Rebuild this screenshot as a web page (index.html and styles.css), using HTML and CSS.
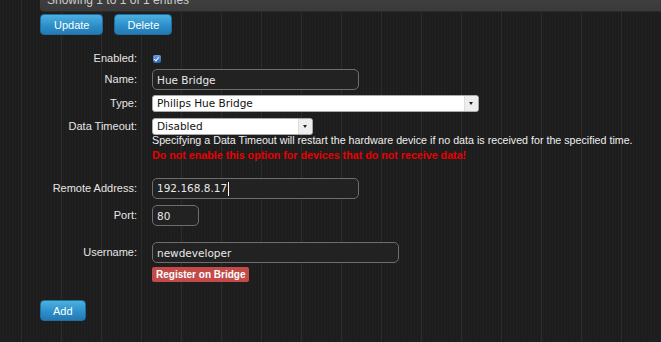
FILE: index.html
```html
<!DOCTYPE html>
<html lang="en">
<head>
  <meta charset="UTF-8" />
  <title>Hardware</title>
  <link rel="stylesheet" href="styles.css">
</head>
<body>

  <div class="info-bar">Showing 1 to 1 of 1 entries</div>

  <div class="actions">
    <button class="btn btn-update">Update</button>
    <button class="btn">Delete</button>
  </div>

  <form class="hw-form">
    <div class="row row-check">
      <label>Enabled:</label>
      <div class="field"><span class="check"></span></div>
    </div>
    <div class="row row-name">
      <label>Name:</label>
      <div class="field"><input type="text" class="text wide" value="Hue Bridge"></div>
    </div>
    <div class="row row-select">
      <label>Type:</label>
      <div class="field"><div class="select type-select">Philips Hue Bridge<span class="arrow"></span></div></div>
    </div>
    <div class="row row-select row-timeout">
      <label>Data Timeout:</label>
      <div class="field">
        <div class="select timeout-select">Disabled<span class="arrow"></span></div>
        <p class="help">Specifying a Data Timeout will restart the hardware device if no data is received for the specified time.</p>
        <p class="warn">Do not enable this option for devices that do not receive data!</p>
      </div>
    </div>

    <div class="row spaced">
      <label>Remote Address:</label>
      <div class="field"><div class="text wide focused">192.168.8.17<span class="caret"></span></div></div>
    </div>
    <div class="row">
      <label>Port:</label>
      <div class="field"><input type="text" class="text port" value="80"></div>
    </div>

    <div class="row spaced-lg">
      <label>Username:</label>
      <div class="field">
        <input type="text" class="text user" value="newdeveloper">
        <button type="button" class="btn-red">Register on Bridge</button>
      </div>
    </div>
  </form>

  <div class="actions add">
    <button class="btn">Add</button>
  </div>

</body>
</html>
```

FILE: styles.css
```css
body {
  margin: 0;
  padding: 0;
  width: 661px;
  height: 342px;
  overflow: hidden;
  font-family: "Liberation Sans", Arial, sans-serif;
  font-size: 11px;
  color: #e6e6e6;
  background-color: #1d1d1d;
  background-image:
    repeating-linear-gradient(90deg, transparent 0, transparent 21px, #2c2c2c 21px, #2c2c2c 22px, transparent 22px, transparent 40px),
    repeating-linear-gradient(90deg, rgba(255,255,255,0.015) 0, rgba(255,255,255,0.015) 1px, transparent 1px, transparent 3px);
}

.info-bar {
  margin-left: 40px;
  height: 11px;
  line-height: 0;
  overflow: hidden;
  background: linear-gradient(#3e3e3e, #3a3a3a);
  border-bottom: 1px solid #2a2a2a;
  border-bottom-left-radius: 4px;
  color: #ccc;
  padding-left: 7px;
  font-size: 12px;
}

.actions {
  display: flex;
  gap: 11px;
  padding-left: 40px;
  margin-top: 2px;
}

.btn {
  height: 21px;
  padding: 0 12px;
  border: 1px solid #1f6e9e;
  border-radius: 4px;
  background: linear-gradient(#4cb0e0, #2b8dc8 60%, #2479b3);
  color: #fff;
  font-family: "Liberation Sans", Arial, sans-serif;
  font-size: 11px;
}

.btn-update {
  padding: 0 13px;
}

.hw-form {
  margin-top: 17px;
}

.row {
  display: flex;
  align-items: flex-start;
  margin-top: 6px;
}

.row label {
  width: 137px;
  text-align: right;
  line-height: 20px;
  flex-shrink: 0;
}

.field {
  margin-left: 15px;
  display: flex;
  flex-direction: column;
  align-items: flex-start;
}

.row-check {
  margin-top: 0;
}

.row-check label {
  line-height: 12px;
}

.row-name {
  margin-top: 5px;
}

.check {
  display: block;
  width: 8px;
  height: 8px;
  margin: 3px 0 0 1px;
  border-radius: 2px;
  background: linear-gradient(#6aa0e0, #2e62b8);
  position: relative;
}

.check::after {
  content: "";
  position: absolute;
  left: 2px;
  top: 1px;
  width: 2px;
  height: 4px;
  border: solid #fff;
  border-width: 0 1.5px 1.5px 0;
  transform: rotate(40deg);
}

.text {
  box-sizing: border-box;
  height: 21px;
  padding: 0 4px;
  border: 1px solid #6e6e6e;
  border-radius: 5px;
  background: #222;
  color: #e8e8e8;
  font-family: "DejaVu Sans", sans-serif;
  font-size: 10.5px;
  line-height: 19px;
  outline: none;
}

.wide {
  width: 207px;
}

.port {
  width: 47px;
}

.user {
  width: 247px;
}

.focused {
  display: flex;
  align-items: center;
}

.caret {
  display: inline-block;
  width: 1px;
  height: 14px;
  background: #fff;
  margin-left: 1px;
}

.row-select {
  margin-top: 5px;
}

.row-timeout {
  margin-top: 6px;
}

.row-select label {
  line-height: 17px;
}

.select {
  box-sizing: border-box;
  position: relative;
  height: 17px;
  padding: 0 4px;
  border: 1px solid #aaa;
  border-radius: 3px;
  background: #fff;
  color: #111;
  font-family: "DejaVu Sans", sans-serif;
  font-size: 10.5px;
  line-height: 15px;
}

.type-select {
  width: 327px;
}

.timeout-select {
  width: 161px;
}

.arrow {
  position: absolute;
  right: 0;
  top: 0;
  width: 13px;
  height: 15px;
  background: #eee;
  border-left: 1px solid #ddd;
  border-radius: 0 2px 2px 0;
}

.arrow::after {
  content: "";
  position: absolute;
  left: 4px;
  top: 6px;
  border: 2.5px solid transparent;
  border-top: 3px solid #222;
}

.help {
  margin: -2px 0 0;
  line-height: 14px;
  font-size: 10.7px;
  color: #eee;
}

.warn {
  margin: 1px 0 0;
  line-height: 14px;
  font-size: 10.7px;
  color: #e80000;
  font-weight: bold;
}

.spaced {
  margin-top: 16px;
}

.spaced-lg {
  margin-top: 16px;
}

.btn-red {
  margin-top: 4px;
  height: 15px;
  padding: 0 4px;
  border: none;
  border-radius: 2px;
  background: #c24a48;
  color: #fff;
  font-family: "Liberation Sans", Arial, sans-serif;
  font-size: 10px;
  font-weight: bold;
}

.add {
  margin-top: 18px;
}

.add .btn {
  padding: 0 12px;
  height: 21px;
}
```
